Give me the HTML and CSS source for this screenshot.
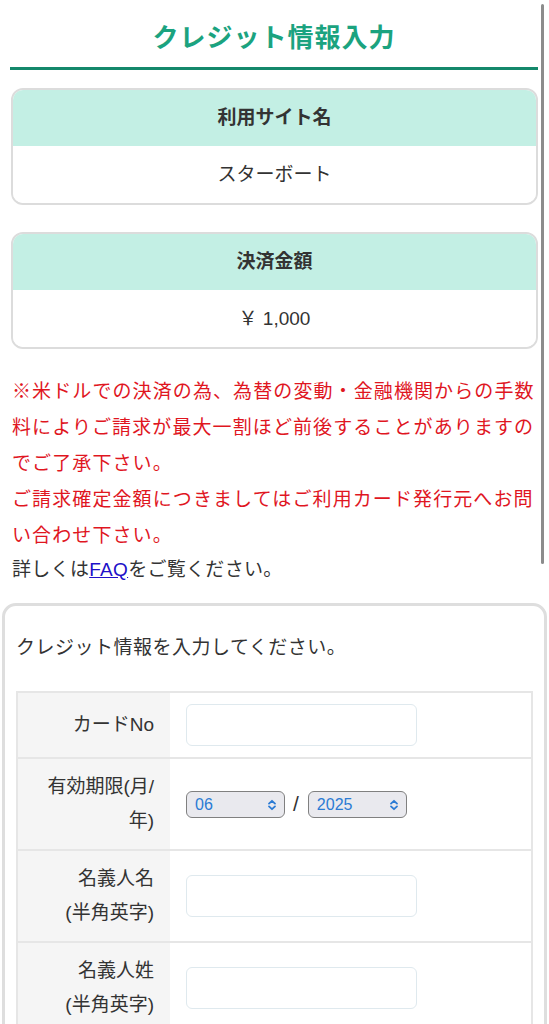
FILE: index.html
```html
<!DOCTYPE html>
<html lang="ja">
<head>
  <meta charset="UTF-8">
  <title>クレジット情報入力</title>
  <link rel="stylesheet" href="styles.css">
</head>
<body>

  <h1 class="page-title">クレジット情報入力</h1>

  <div class="info-card first">
    <div class="info-head">利用サイト名</div>
    <div class="info-body">スターボート</div>
  </div>

  <div class="info-card">
    <div class="info-head">決済金額</div>
    <div class="info-body">￥ 1,000</div>
  </div>

  <div class="notice">
    <p class="notice-red">※米ドルでの決済の為、為替の変動・金融機関からの手数料によりご請求が最大一割ほど前後することがありますのでご了承下さい。<br>ご請求確定金額につきましてはご利用カード発行元へお問い合わせ下さい。</p>
    <p class="notice-faq">詳しくは<a href="#">FAQ</a>をご覧ください。</p>
  </div>

  <form class="credit-panel" id="creditForm">
    <p class="panel-lead">クレジット情報を入力してください。</p>

    <table class="credit-table">
      <tr>
        <th>カードNo</th>
        <td><input type="text" name="cardNo" class="text-input"></td>
      </tr>
      <tr>
        <th>有効期限(月/年)</th>
        <td>
          <div class="expire">
            <span class="select-wrap">
              <select name="month">
                <option>01</option><option>02</option><option>03</option>
                <option>04</option><option>05</option><option selected>06</option>
                <option>07</option><option>08</option><option>09</option>
                <option>10</option><option>11</option><option>12</option>
              </select>
              <svg class="select-icon" viewBox="0 0 12 12" width="12" height="12"><path d="M3 4.6 L6 1.8 L9 4.6 M3 7.4 L6 10.2 L9 7.4" fill="none" stroke="#2b7bd4" stroke-width="1.8" stroke-linecap="round" stroke-linejoin="round"/></svg>
            </span>
            <span class="slash">/</span>
            <span class="select-wrap">
              <select name="year">
                <option selected>2025</option><option>2026</option><option>2027</option>
                <option>2028</option><option>2029</option><option>2030</option>
              </select>
              <svg class="select-icon" viewBox="0 0 12 12" width="12" height="12"><path d="M3 4.6 L6 1.8 L9 4.6 M3 7.4 L6 10.2 L9 7.4" fill="none" stroke="#2b7bd4" stroke-width="1.8" stroke-linecap="round" stroke-linejoin="round"/></svg>
            </span>
          </div>
        </td>
      </tr>
      <tr>
        <th>名義人名<br>(半角英字)</th>
        <td><input type="text" name="firstName" class="text-input"></td>
      </tr>
      <tr>
        <th>名義人姓<br>(半角英字)</th>
        <td><input type="text" name="lastName" class="text-input"></td>
      </tr>
    </table>
  </form>

  <div class="scroll-indicator"></div>

</body>
</html>
```

FILE: styles.css
```css
body {
  margin: 0;
  font-family: "Liberation Sans", "Noto Sans CJK JP", sans-serif;
  color: #333;
  background: #fff;
}

.page-title {
  margin: 0 11px 0 10px;
  padding: 20px 0 11px;
  line-height: 36px;
  font-size: 26px;
  font-weight: bold;
  text-align: center;
  color: #1ba37f;
  border-bottom: 3px solid #14886b;
  letter-spacing: 1px;
}

.info-card {
  margin: 27px 11px 0;
  border: 2px solid #dcdcdc;
  border-radius: 12px;
  overflow: hidden;
  text-align: center;
  font-size: 19px;
}

.info-card.first {
  margin-top: 18px;
}

.info-head {
  height: 56px;
  line-height: 56px;
  background: #c3efe4;
  font-weight: bold;
}

.info-body {
  height: 57px;
  line-height: 57px;
  background: #fff;
}

.notice {
  margin: 25px 11px 0 12px;
  font-size: 19px;
}

.notice p {
  margin: 0;
}

.notice-red {
  color: #e0161f;
  line-height: 36px;
  letter-spacing: 1.1px;
}

.notice-faq {
  line-height: 32px;
  letter-spacing: 0.3px;
}

.notice-faq a {
  color: #2010c8;
}

.credit-panel {
  margin: 17px 2px 0;
  padding: 20px 11px 20px;
  border: 3px solid #dedede;
  border-radius: 14px;
}

.panel-lead {
  margin: 0 0 21px;
  font-size: 19px;
  line-height: 44px;
  letter-spacing: 0.5px;
}

.credit-table {
  width: 100%;
  border-collapse: collapse;
  border: 2px solid #e6e6e6;
  font-size: 19px;
}

.credit-table th,
.credit-table td {
  border-top: 2px solid #e6e6e6;
  padding: 11px 0;
}

.credit-table th {
  width: 126px;
  padding-left: 10px;
  padding-right: 16px;
  background: #f5f5f5;
  font-weight: normal;
  text-align: right;
  line-height: 34px;
}

.credit-table td {
  padding-left: 16px;
  vertical-align: middle;
}

.text-input {
  display: block;
  width: 231px;
  height: 42px;
  box-sizing: border-box;
  border: 1px solid #dfe9ee;
  border-radius: 6px;
  background: #fff;
}

.expire {
  display: flex;
  align-items: center;
}

.slash {
  margin: 0 9px 0 8px;
  font-size: 21px;
}

.select-wrap {
  position: relative;
  display: inline-block;
  height: 27px;
}

.select-wrap select {
  appearance: none;
  -webkit-appearance: none;
  width: 99px;
  height: 27px;
  box-sizing: border-box;
  border: 1px solid #808080;
  border-radius: 6px;
  background: #e9e9ee;
  color: #2b7bd4;
  font-family: "Liberation Sans", sans-serif;
  font-size: 16px;
  padding: 0 0 0 8px;
}

.select-icon {
  position: absolute;
  right: 7px;
  top: 8px;
  pointer-events: none;
}

.scroll-indicator {
  position: fixed;
  top: 4px;
  right: 5px;
  width: 3px;
  height: 560px;
  border-radius: 2px;
  background: #8c8c8c;
}
```
